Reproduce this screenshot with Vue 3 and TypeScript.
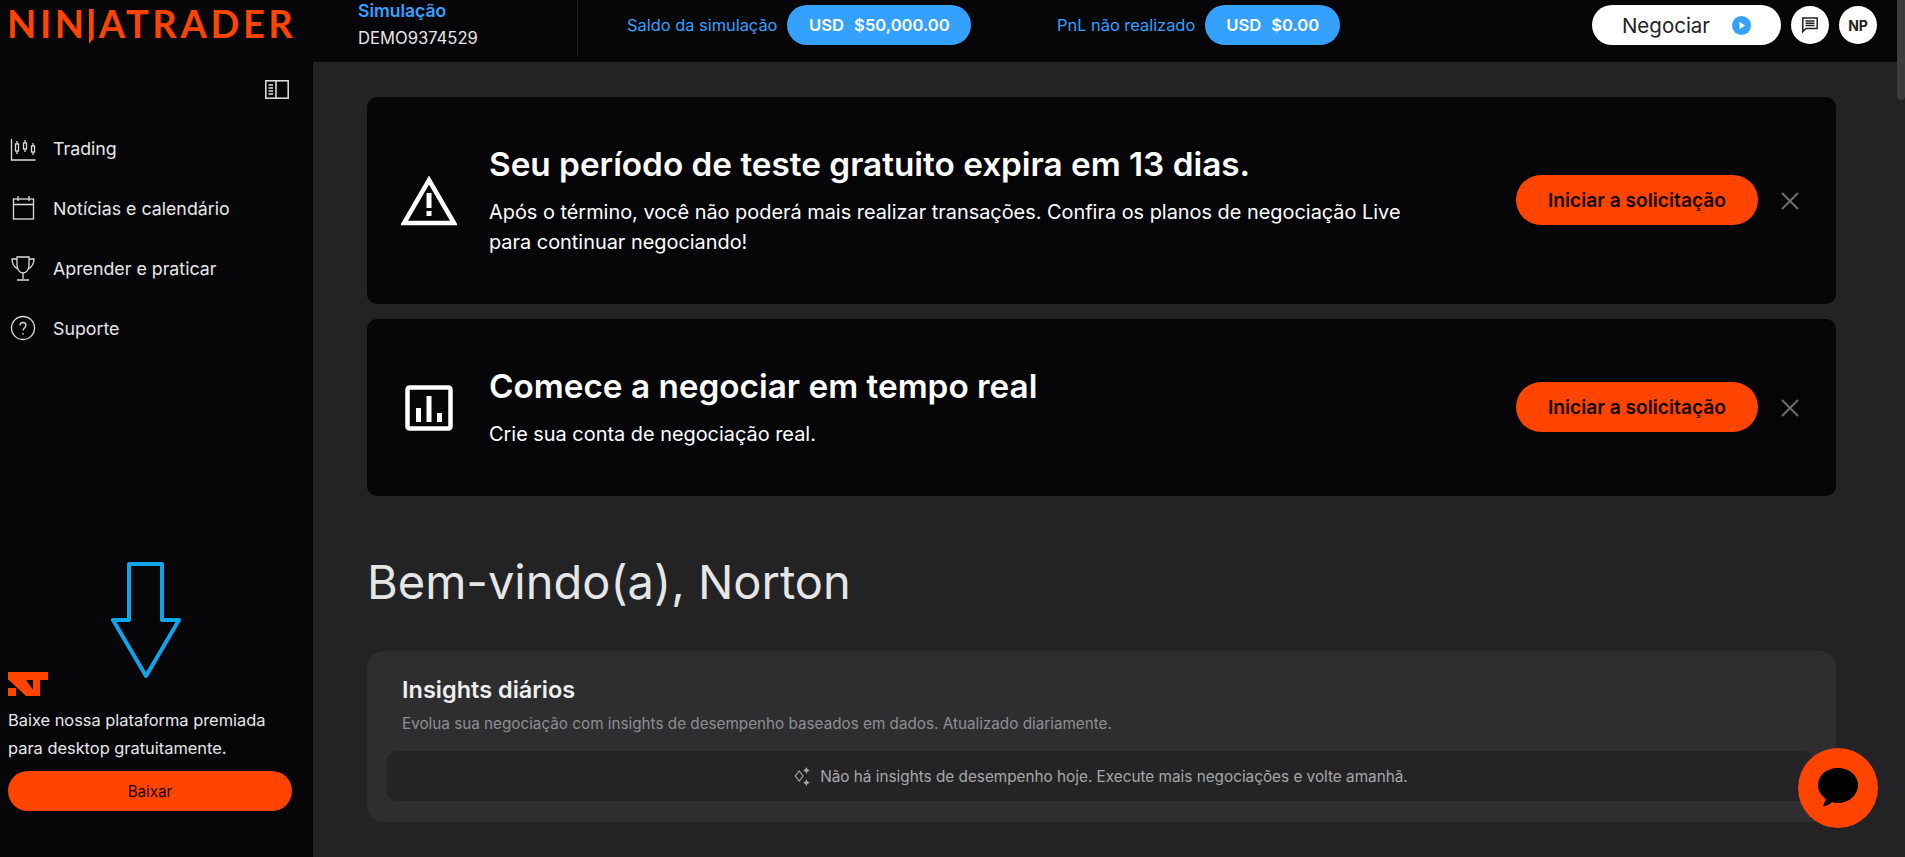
<template>
  <div class="page">
    <div class="app">
      <header class="topbar">
        <div class="logo">NIN<span class="logo-j">J</span>ATRADER</div>
        <div class="account">
          <div class="account-type">Simulação</div>
          <div class="account-id">DEMO9374529</div>
        </div>
        <div class="balances">
          <div v-for="b in balances" :key="b.label" class="balance" :class="b.cls">
            <span class="balance-label">{{ b.label }}</span>
            <span class="balance-pill"><span>USD</span><span>{{ b.value }}</span></span>
          </div>
        </div>
        <div class="top-actions">
          <button class="trade-btn">
            <span>Negociar</span>
            <svg width="19" height="19" viewBox="0 0 19 19"><circle cx="9.5" cy="9.5" r="9.5" fill="#35a1ff" /><path d="M7.5 5.8v7.4l5.6-3.7z" fill="#fff" /></svg>
          </button>
          <button class="round-btn">
            <svg width="18" height="18" viewBox="0 0 18 18" fill="none" stroke="#222" stroke-width="1.5"><path d="M1.800 2h14.400v10.400H5L1.800 15.600z" /><path d="M4.500 5h9M4.500 7.300h9M4.500 9.600h9" /></svg>
          </button>
          <button class="round-btn initials">NP</button>
        </div>
      </header>
      <div class="body">
        <aside class="sidebar">
          <div class="collapse-row">
            <svg width="24" height="19" viewBox="0 0 24 19" fill="none" stroke="#e4e4e4" stroke-width="1.500"><rect x=".8" y=".8" width="22.400" height="17.400" /><path d="M11 1v17M3.500 5h4.500M3.500 8h4.500M3.500 11h4.500M3.500 14h4.500" /></svg>
          </div>
          <nav class="nav">
            <a v-for="item in nav" :key="item.label" class="nav-item">
              <svg width="26" height="26" viewBox="0 0 26 26" fill="none" stroke="#ddd" stroke-width="1.300" v-html="item.icon"></svg>
              <span>{{ item.label }}</span>
            </a>
          </nav>
          <svg class="arrow" width="72" height="118" viewBox="0 0 72 118" fill="none" stroke="#0ea5e9" stroke-width="4" stroke-linejoin="round"><path d="M18 3h33v56h17L35 115 2 59h16z" /></svg>
          <div class="promo">
            <svg width="40" height="24" viewBox="0 0 40 24" fill="#ff4400"><path d="M0 0h40v8h-8v16H18L1 8H0z" /><path d="M0 16h8v8H0z" /><path d="M18 8h7v10z" fill="#060609" /></svg>
            <p>Baixe nossa plataforma premiada para desktop gratuitamente.</p>
            <button class="download-btn">Baixar</button>
          </div>
        </aside>
        <main class="content">
          <section v-for="c in cards" :key="c.title" class="notice" :class="c.cls">
            <div class="notice-icon" v-html="c.icon"></div>
            <div class="notice-text">
              <h2>{{ c.title }}</h2>
              <p>{{ c.text }}</p>
            </div>
            <button class="apply-btn">Iniciar a solicitação</button>
            <svg class="close" width="18" height="18" viewBox="0 0 18 18" stroke="#6e6e6e" stroke-width="2"><path d="M1 1l16 16M17 1L1 17" /></svg>
          </section>
          <h1 class="welcome">Bem-vindo(a), Norton</h1>
          <section class="insights">
            <h3>Insights diários</h3>
            <p class="insights-sub">Evolua sua negociação com insights de desempenho baseados em dados. Atualizado diariamente.</p>
            <div class="insights-empty">
              <svg width="20" height="20" viewBox="0 0 18 18" fill="none" stroke="#aaa" stroke-width="1"><path d="M6.500 4.500 10 9l-3.500 4.500L3 9z" /><path d="M13 1l1 2 2 1-2 1-1 2-1-2-2-1 2-1zM13 12l1 2 2 1-2 1-1 2-1-2-2-1 2-1z" fill="#aaa" stroke="none" /></svg>
              <span>Não há insights de desempenho hoje. Execute mais negociações e volte amanhã.</span>
            </div>
          </section>
        </main>
      </div>
      <button class="chat-fab">
        <svg width="42" height="42" viewBox="0 0 42 42"><path d="M21 1c11 0 20 7 20 17s-9 18-20 18c-2 0-4 0-6-1-2 2-6 5-9 4l3-7C4 28 1 24 1 18 1 8 10 1 21 1z" fill="#000" /></svg>
      </button>
    </div>
    <div class="scrollbar"><div class="thumb"></div></div>
  </div>
</template>

<script setup lang="ts">
const balances = [
  { label: 'Saldo da simulação', value: '$50,000.00', cls: 'first' },
  { label: 'PnL não realizado', value: '$0.00', cls: 'second' },
]

const nav = [
  {
    label: 'Trading',
    icon: '<path d="M1.500 4v21h24"/><path d="M7 6v3M7 16v3M15 5v3M15 14v3M23 8v3M23 17v3"/><rect x="5.500" y="9" width="3" height="7"/><rect x="13.500" y="8" width="3" height="6"/><rect x="21.500" y="11" width="3" height="6"/>',
  },
  {
    label: 'Notícias e calendário',
    icon: '<rect x="3.500" y="4" width="20" height="20"/><path d="M3.500 9.500h20M8 1v5M19 1v5"/>',
  },
  {
    label: 'Aprender e praticar',
    icon: '<path d="M7 2h12v8c0 5-3 8-6 8s-6-3-6-8z"/><path d="M7 4H2c0 5 2 8 6 10M19 4h5c0 5-2 8-6 10M13 18v6M7 25h12"/>',
  },
  {
    label: 'Suporte',
    icon: '<circle cx="13" cy="13" r="11.500"/><path d="M10 10.500c0-4 6-4 6 0 0 2-3 2.500-3 5"/><path d="M13 18v1.500"/>',
  },
]

const warnIcon = '<svg width="56" height="50" viewBox="0 0 56 50"><path d="M28 4 53 47H3z" fill="none" stroke="#fff" stroke-width="4.500" /><path d="M25.500 17h5v15h-5zM25.500 35h5v5h-5z" fill="#fff" /></svg>'
const chartIcon = '<svg width="48" height="46" viewBox="0 0 48 46"><rect x="2.500" y="2.500" width="43" height="41" rx="2" fill="none" stroke="#fff" stroke-width="4.500" /><path d="M11 23h5v14h-5zM21.500 11h5v26h-5zM32 28h5v9h-5z" fill="#fff" /></svg>'

const cards = [
  {
    cls: 'tall',
    icon: warnIcon,
    title: 'Seu período de teste gratuito expira em 13 dias.',
    text: 'Após o término, você não poderá mais realizar transações. Confira os planos de negociação Live para continuar negociando!',
  },
  {
    cls: 'short',
    icon: chartIcon,
    title: 'Comece a negociar em tempo real',
    text: 'Crie sua conta de negociação real.',
  },
]
</script>

<style>
html, body { margin: 0; background: #232325; overflow: hidden; }
</style>

<style scoped>
.page { display: flex; height: 857px; overflow: hidden; font-family: Inter, "Liberation Sans", sans-serif; color: #fff; }
.app { flex: 1; min-width: 0; display: flex; flex-direction: column; position: relative; }
.scrollbar { width: 8px; background: #232325; }
.thumb { height: 100px; background: #3c3c3e; border-radius: 0 0 4px 4px; }

.topbar { height: 62px; flex-shrink: 0; background: #060609; display: flex; align-items: flex-start; }
.logo { width: 358px; padding: 0 0 0 7px; box-sizing: border-box; font: 700 38px/46px Lato, Inter, sans-serif; letter-spacing: 3.600px; color: #ff4400; white-space: nowrap; }
.logo-j { display: inline-block; width: 5px; height: 35px; margin: 9px 5px 0 1px; vertical-align: top; background: #ff4400; font-size: 6px; line-height: 8px; letter-spacing: 0; clip-path: polygon(0 0, 100% 0, 100% 85%, 0 100%); }
.account { width: 220px; height: 57px; box-sizing: border-box; border-right: 1px solid #222226; }
.account-type { font-size: 17.500px; font-weight: 600; color: #35a1ff; line-height: 20px; margin-top: 1px; }
.account-id { font-size: 16.600px; color: #e6e6e6; line-height: 20px; margin-top: 7px; }
.balances { display: flex; margin-left: 49px; padding-top: 5px; }
.balance { display: flex; align-items: center; gap: 10px; }
.balance.first { width: 430px; }
.balance-label { font-size: 16.400px; color: #35a1ff; white-space: nowrap; }
.balance-pill { height: 40px; border-radius: 20px; background: #35a1ff; display: flex; align-items: center; justify-content: center; gap: 10px; font-size: 16.600px; font-weight: 600; }
.first .balance-pill { width: 184px; }
.second .balance-pill { width: 135px; }
.top-actions { margin-left: auto; display: flex; align-items: center; gap: 10px; padding: 5px 20px 0 0; }
.trade-btn { width: 189px; height: 40px; border: 0; border-radius: 20px; background: #fff; color: #222; font: 400 20.500px Inter, sans-serif; display: flex; align-items: center; justify-content: center; gap: 22px; padding: 0; }
.round-btn { width: 38px; height: 38px; border: 0; border-radius: 50%; background: #fff; color: #222; display: flex; align-items: center; justify-content: center; padding: 0; font: 700 14px Inter, sans-serif; }

.body { flex: 1; min-height: 0; display: flex; }
.sidebar { width: 313px; flex-shrink: 0; background: #060609; position: relative; display: flex; flex-direction: column; box-sizing: border-box; padding: 0 24px 46px 8px; }
.collapse-row { display: flex; justify-content: flex-end; padding: 18px 0 0; }
.nav { margin-top: 32px; display: flex; flex-direction: column; gap: 26px; }
.nav-item { display: flex; align-items: center; gap: 17px; padding-left: 2px; height: 34px; font-size: 17.800px; color: #e6e6e6; white-space: nowrap; }
.arrow { position: absolute; left: 111px; top: 499px; }
.promo { margin-top: auto; }
.promo svg { display: block; }
.promo p { margin: 10px 0 0; font-size: 16.400px; line-height: 28px; color: #e6e6e6; width: 280px; }
.download-btn { width: 284px; height: 40px; border: 0; border-radius: 20px; background: #ff4400; color: #1a0600; font: 400 15.200px Inter, sans-serif; margin-top: 9px; padding: 0; }

.content { flex: 1; min-width: 0; padding: 35px 61px 0 54px; display: flex; flex-direction: column; }
.notice { background: #060609; border-radius: 10px; display: flex; align-items: center; padding: 0 37px 0 34px; }
.notice.tall { height: 207px; margin-bottom: 15px; }
.notice.short { height: 177px; }
.notice-icon { width: 56px; display: flex; justify-content: center; margin-right: 32px; }
.notice-text { flex: 1; min-width: 0; }
.notice-text h2 { margin: -1px 0 0; font-size: 33.300px; line-height: 40px; font-weight: 600; }
.notice-text p { margin: 13px 0 0; font-size: 19.900px; line-height: 30px; width: 930px; }
.apply-btn { width: 242px; height: 50px; border: 0; border-radius: 25px; background: #ff4400; color: #120400; font: 600 19.200px Inter, sans-serif; padding: 0; flex-shrink: 0; margin-top: -1px; }
.close { margin-left: 23px; flex-shrink: 0; }
.welcome { margin: 56px 0 0; font-size: 47px; line-height: 60px; font-weight: 400; color: #e6e6e6; }
.insights { margin-top: 39px; background: #2e2e30; border-radius: 16px; height: 171px; padding: 24px 23px 0 20px; box-sizing: border-box; }
.insights h3 { margin: 0 0 0 15px; font-size: 23.500px; line-height: 30px; font-weight: 600; color: #eee; }
.insights-sub { margin: 9px 0 0 15px; font-size: 15.250px; line-height: 20px; color: #8e8e90; }
.insights-empty { margin-top: 17px; height: 50px; background: #242426; border-radius: 10px; display: flex; align-items: center; justify-content: center; gap: 8px; font-size: 15.300px; color: #a8a8a8; }
.chat-fab { position: absolute; left: 1798px; top: 748px; width: 80px; height: 80px; border: 0; border-radius: 50%; background: #ff4400; display: flex; align-items: center; justify-content: center; padding: 0; }
</style>
